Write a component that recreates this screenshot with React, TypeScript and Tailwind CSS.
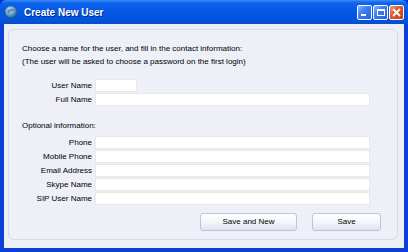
import React from "react";

const font = { fontFamily: '"Liberation Sans", Arial, sans-serif' };

function Field({ label, w }: { label: string; w?: string }) {
  return (
    <div className="flex h-[13px] items-center mb-[1px]">
      <div className="w-[73px] pr-[3px] text-right leading-none text-black">{label}</div>
      <div className={`h-[13px] ${w ?? "w-[275px]"} bg-white border border-[#ECE6E6]`} />
    </div>
  );
}

function CtlBtn({ kind }: { kind: "min" | "max" | "close" }) {
  const close = kind === "close";
  return (
    <div
      className={`w-[15px] h-[15px] rounded-[2px] border border-white flex items-center justify-center ${
        close
          ? "bg-[linear-gradient(135deg,#F0A080_0%,#E3582E_40%,#C8401A_100%)]"
          : "bg-[linear-gradient(135deg,#8EB4FA_0%,#3C7EF5_40%,#2760E0_100%)]"
      }`}
    >
      {kind === "min" && <div className="w-[5px] h-[2px] bg-white mt-[6px] mr-[3px]" />}
      {kind === "max" && <div className="w-[8px] h-[7px] border border-white border-t-[2px]" />}
      {kind === "close" && (
        <svg width="9" height="9" viewBox="0 0 9 9">
          <path d="M1 1 L8 8 M8 1 L1 8" stroke="white" strokeWidth="1.8" />
        </svg>
      )}
    </div>
  );
}

export default function App() {
  return (
    <div className="w-[408px] h-[252px] flex flex-col bg-[#0831D9] text-[8px]" style={font}>
      {/* Title bar */}
      <div className="h-[24px] flex items-center pl-[4px] pr-[4px] rounded-t-[6px] bg-[linear-gradient(180deg,#3D8BF7_0%,#0D63EC_12%,#0458E4_50%,#0254DE_85%,#0A4CCB_100%)]">
        <svg width="14" height="14" viewBox="0 0 14 14" className="mr-[6px]">
          <defs>
            <radialGradient id="g" cx="40%" cy="35%" r="65%">
              <stop offset="0%" stopColor="#E8F4FF" />
              <stop offset="50%" stopColor="#6FA8D8" />
              <stop offset="100%" stopColor="#2B5C8E" />
            </radialGradient>
          </defs>
          <circle cx="7" cy="7" r="6.2" fill="url(#g)" stroke="#24507E" strokeWidth="0.6" />
          <path d="M3 6 C5 3, 9 3, 11 6 C9 5, 6 6, 5 9 Z" fill="#3C6FA0" opacity="0.7" />
        </svg>
        <span className="text-white font-bold text-[10px] [text-shadow:1px_1px_0_#0A2A8A]">Create New User</span>
        <div className="flex-1" />
        <div className="flex gap-[1px]">
          <CtlBtn kind="min" />
          <CtlBtn kind="max" />
          <CtlBtn kind="close" />
        </div>
      </div>
      {/* Body */}
      <div className="flex-1 border-x-[4px] border-b-[4px] border-[#0B3FD6] bg-[#ECEFF6] pt-[5px] pl-[4px] pr-[6px] pb-[8px] flex">
        <div className="flex-1 rounded-[6px] border border-[#D4DAE8] bg-[repeating-linear-gradient(180deg,#F0F2F8_0px,#F0F2F8_1px,#EBEEF6_1px,#EBEEF6_2px)] pl-[13px] pt-[12px] text-black">
          <div className="leading-[13px]">Choose a name for the user, and fill in the contact information:</div>
          <div className="leading-[13px]">(The user will be asked to choose a password on the first login)</div>
          <div className="mt-[11px]">
            <Field label="User Name" w="w-[42px]" />
            <Field label="Full Name" />
          </div>
          <div className="mt-[13px] leading-[13px] h-[16px]">Optional information:</div>
          <div className="mt-[1px]">
            <Field label="Phone" />
            <Field label="Mobile Phone" />
            <Field label="Email Address" />
            <Field label="Skype Name" />
            <Field label="SIP User Name" />
          </div>
          <div className="flex mt-[8px] ml-[178px] gap-[15px]">
            <div className="w-[97px] h-[18px] rounded-[3px] border border-[#B9C6DC] bg-[linear-gradient(180deg,#FFFFFF_0%,#F4F6FB_50%,#DCE3EF_100%)] flex items-center justify-center">
              Save and New
            </div>
            <div className="w-[69px] h-[18px] rounded-[3px] border border-[#B9C6DC] bg-[linear-gradient(180deg,#FFFFFF_0%,#F4F6FB_50%,#DCE3EF_100%)] flex items-center justify-center">
              Save
            </div>
          </div>
        </div>
      </div>
    </div>
  );
}
